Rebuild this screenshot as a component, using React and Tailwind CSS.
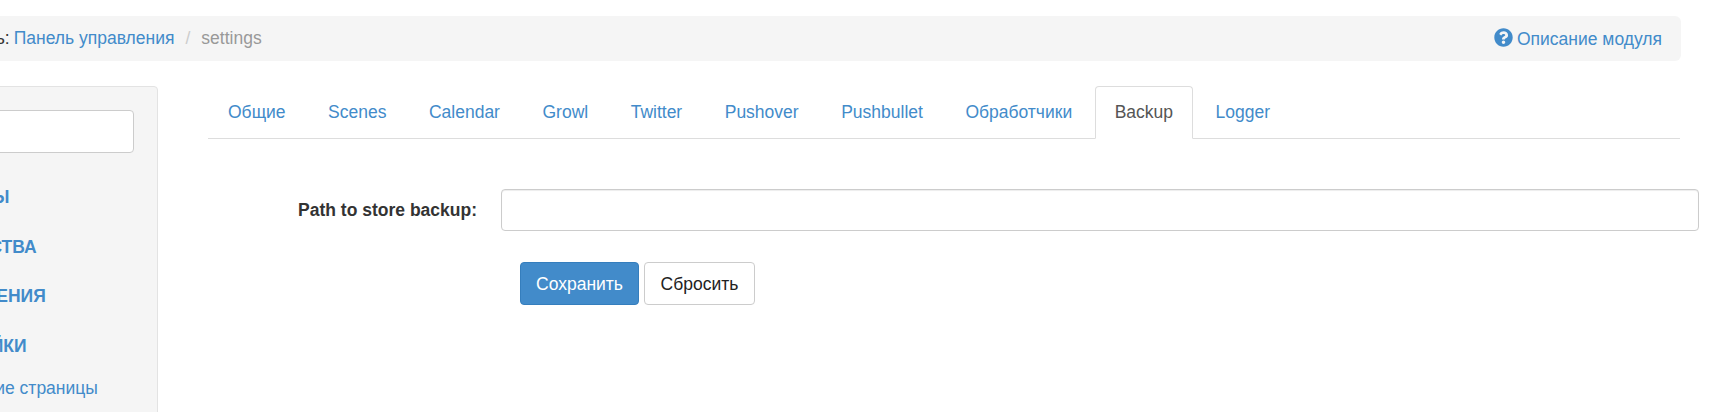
import React from 'react';
import { FaQuestionCircle } from 'react-icons/fa';

const tabs = ['Общие', 'Scenes', 'Calendar', 'Growl', 'Twitter', 'Pushover', 'Pushbullet', 'Обработчики', 'Backup', 'Logger'];
const menu = ['ОБЪЕКТЫ', 'УСТРОЙСТВА', 'ПРИЛОЖЕНИЯ', 'НАСТРОЙКИ'];

const App = () => {
  return (
    <div className="h-[412px] w-[1715px] overflow-hidden bg-white font-['Liberation_Sans',Arial,sans-serif] text-[17.5px] text-[#333]">
      <div className="ml-[-120px] w-[1835px] pt-4">
        {/* Breadcrumb */}
        <div className="flex h-[45px] w-[1801px] items-center justify-between rounded-md bg-[#f5f5f5] pr-[19px] pl-[3px]">
          <div className="flex items-center whitespace-nowrap">
            <span className="mr-1">Вы находитесь:</span>
            <a className="text-[#428bca]">Панель управления</a>
            <span className="px-[11px] text-[#ccc]">/</span>
            <span className="text-[#999]">settings</span>
          </div>
          <a className="flex items-center gap-1 pt-[2px] text-[#428bca]">
            <FaQuestionCircle className="mt-[-5px] h-[19px] w-[19px]" />
            Описание модуля
          </a>
        </div>

        <div className="mt-[25px] flex">
          {/* Sidebar */}
          <div className="h-[400px] w-[278px] shrink-0 rounded-sm border border-[#e3e3e3] bg-[#f5f5f5] pt-[23px] pl-[37px]">
            <div className="h-[43px] w-[216px] rounded border border-[#ccc] bg-white" />
            <ul className="mt-[33px] font-bold text-[#428bca]">
              {menu.map((item) => (
                <li key={item} className="mb-[27.5px] h-[22px] whitespace-nowrap leading-[22px]">{item}</li>
              ))}
              <li className="mt-[-9px] ml-[10px] font-normal whitespace-nowrap">Домашние страницы</li>
            </ul>
          </div>

          {/* Content */}
          <div className="ml-[50px] w-[1472px] shrink-0">
            <ul className="flex h-[53px] border-b border-[#ddd]">
              {tabs.map((tab) => (
                <li key={tab} className="mr-[2.5px]">
                  <a
                    className={`block h-[53px] rounded-t border px-[19px] leading-[50px] ${
                      tab === 'Backup'
                        ? 'border-[#ddd] border-b-white bg-white text-[#555]'
                        : 'border-transparent text-[#428bca]'
                    }`}
                  >
                    {tab}
                  </a>
                </li>
              ))}
            </ul>

            <div className="mt-[50px] flex items-center">
              <label className="w-[269px] shrink-0 text-right font-bold">Path to store backup:</label>
              <input
                type="text"
                className="ml-[24px] h-[42px] w-[1198px] shrink-0 rounded border border-[#ccc] bg-white shadow-[inset_0_1px_1px_rgba(0,0,0,0.075)]"
              />
            </div>

            <div className="mt-[31px] ml-[312px] flex gap-[5px]">
              <button className="h-[43px] w-[119px] rounded border border-[#357ebd] bg-[#428bca] pt-[2px] text-white">Сохранить</button>
              <button className="h-[43px] w-[111px] rounded border border-[#ccc] bg-white pt-[2px] text-[#222]">Сбросить</button>
            </div>
          </div>
        </div>
      </div>
    </div>
  );
};

export default App;
